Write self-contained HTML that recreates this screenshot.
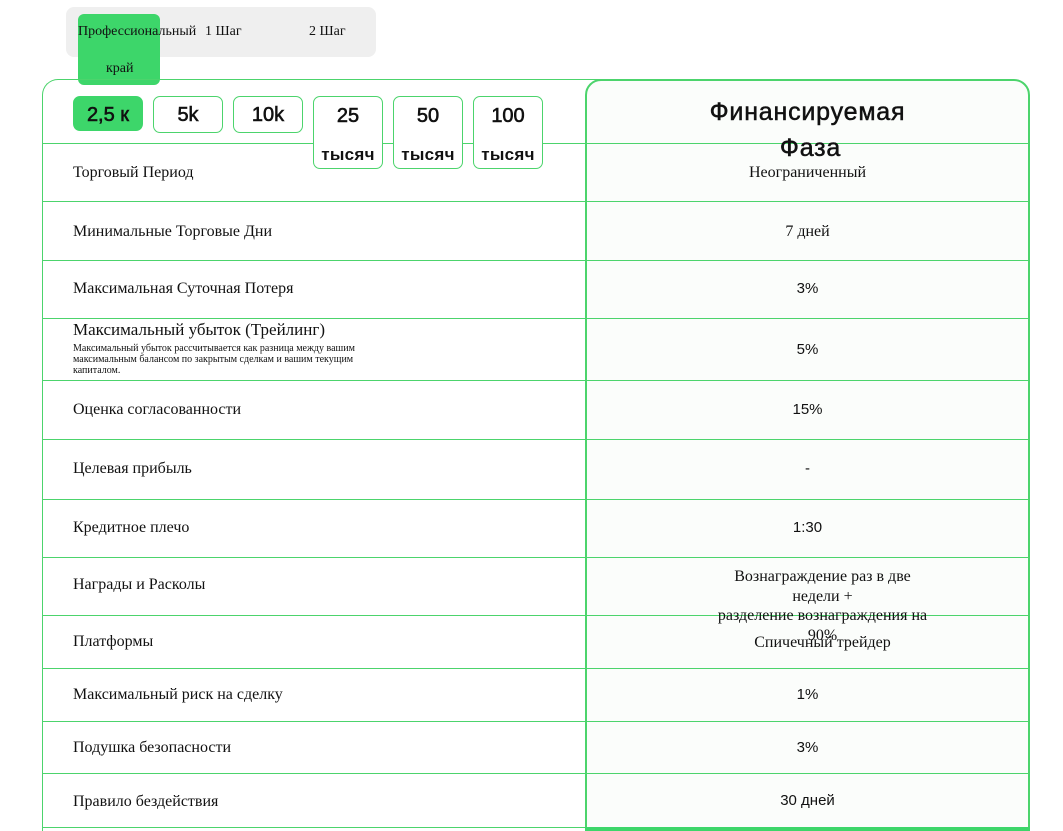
<!DOCTYPE html>
<html><head><meta charset="utf-8"><style>
*{margin:0;padding:0;box-sizing:border-box}
html,body{width:1063px;height:831px;overflow:hidden}
body{background:#fff;position:relative;font-family:"Liberation Serif","Noto Serif CJK SC",serif;color:#111}
.a{position:absolute;white-space:nowrap}
.s{font-family:"Liberation Sans",sans-serif}
.hl{position:absolute;left:42px;width:988px;height:1px;background:#4cd46c}
.lab{position:absolute;left:73px;font-size:16px;line-height:20px}
.val{position:absolute;left:587px;width:441px;text-align:center;font-size:16px;line-height:20px}
.btn{position:absolute;top:96px;width:70px;border:1px solid #4cd46c;border-radius:7px;text-align:center;font-family:"Liberation Sans",sans-serif;font-size:20px;line-height:36px;background:#fff;-webkit-text-stroke:0.6px #111}
.btn span{display:block;font-size:17px;font-weight:700;line-height:20px;margin-top:10px;letter-spacing:0.3px;-webkit-text-stroke:0}
</style></head><body>
<div class="a" style="left:66px;top:7px;width:310px;height:50px;background:#efefef;border-radius:8px"></div>
<div class="a" style="left:78px;top:14px;width:82px;height:71px;background:#3dd66a;border-radius:6px"></div>
<div class="a" style="left:78px;top:23px;font-size:14px;line-height:18px">Профессиональный</div>
<div class="a" style="left:106px;top:60px;font-size:14px;line-height:18px">край</div>
<div class="a" style="left:205px;top:23px;font-size:14px;line-height:18px">1 Шаг</div>
<div class="a" style="left:309px;top:23px;font-size:14px;line-height:18px">2 Шаг</div>

<div class="a" style="left:42px;top:79px;width:560px;height:760px;border:1px solid #4cd46c;border-right:none;border-radius:16px 0 0 0"></div>
<div class="a" style="left:585px;top:79px;width:445px;height:760px;border:2px solid #4cd46c;border-radius:16px 16px 0 0;background:#fbfdfb"></div>

<div class="hl" style="top:143px"></div><div class="hl" style="top:201px"></div><div class="hl" style="top:260px"></div><div class="hl" style="top:318px"></div><div class="hl" style="top:380px"></div><div class="hl" style="top:439px"></div><div class="hl" style="top:499px"></div><div class="hl" style="top:557px"></div><div class="hl" style="top:615px"></div><div class="hl" style="top:668px"></div><div class="hl" style="top:721px"></div><div class="hl" style="top:773px"></div><div class="hl" style="top:827px"></div>
<div class="a" style="left:585px;top:827px;width:445px;height:4px;background:#3dd66a"></div>

<div class="btn" style="left:73px;height:35px;background:#3dd66a;border-color:#3dd66a">2,5 к</div>
<div class="btn" style="left:153px;height:37px">5k</div>
<div class="btn" style="left:233px;height:37px">10k</div>
<div class="btn" style="left:313px;height:73px;line-height:38px">25<span>тысяч</span></div>
<div class="btn" style="left:393px;height:73px;line-height:38px">50<span>тысяч</span></div>
<div class="btn" style="left:473px;height:73px;line-height:38px">100<span>тысяч</span></div>

<div class="a s" style="left:587px;width:441px;text-align:center;top:94px;font-size:25px;line-height:36px;letter-spacing:0.8px;-webkit-text-stroke:0.5px #111">Финансируемая<br><span style="margin-left:6px">Фаза</span></div>

<div class="lab" style="top:163px">Торговый Период</div>
<div class="val" style="top:163px">Неограниченный</div>
<div class="lab" style="top:222px">Минимальные Торговые Дни</div>
<div class="val" style="top:222px">7 дней</div>
<div class="lab" style="top:279px">Максимальная Суточная Потеря</div>
<div class="val s" style="top:279px;font-size:15px">3%</div>
<div class="lab" style="top:320px;font-size:17px">Максимальный убыток (Трейлинг)</div>
<div class="a" style="left:73px;top:343px;font-size:10px;line-height:11px">Максимальный убыток рассчитывается как разница между вашим<br>максимальным балансом по закрытым сделкам и вашим текущим<br>капиталом.</div>
<div class="val s" style="top:340px;font-size:15px">5%</div>
<div class="lab" style="top:400px">Оценка согласованности</div>
<div class="val s" style="top:400px;font-size:15px">15%</div>
<div class="lab" style="top:459px">Целевая прибыль</div>
<div class="val s" style="top:459px;font-size:15px">-</div>
<div class="lab" style="top:518px">Кредитное плечо</div>
<div class="val s" style="top:518px;font-size:15px">1:30</div>
<div class="lab" style="top:575px">Награды и Расколы</div>
<div class="val" style="top:567px;line-height:19.5px;padding-left:30px">Вознаграждение раз в две<br>недели +<br>разделение вознаграждения на<br>90%</div>
<div class="lab" style="top:632px">Платформы</div>
<div class="val" style="top:633px;padding-left:30px">Спичечный трейдер</div>
<div class="lab" style="top:685px">Максимальный риск на сделку</div>
<div class="val s" style="top:685px;font-size:15px">1%</div>
<div class="lab" style="top:738px">Подушка безопасности</div>
<div class="val s" style="top:738px;font-size:15px">3%</div>
<div class="lab" style="top:792px">Правило бездействия</div>
<div class="val s" style="top:791px;font-size:15px">30 дней</div>
</body></html>
